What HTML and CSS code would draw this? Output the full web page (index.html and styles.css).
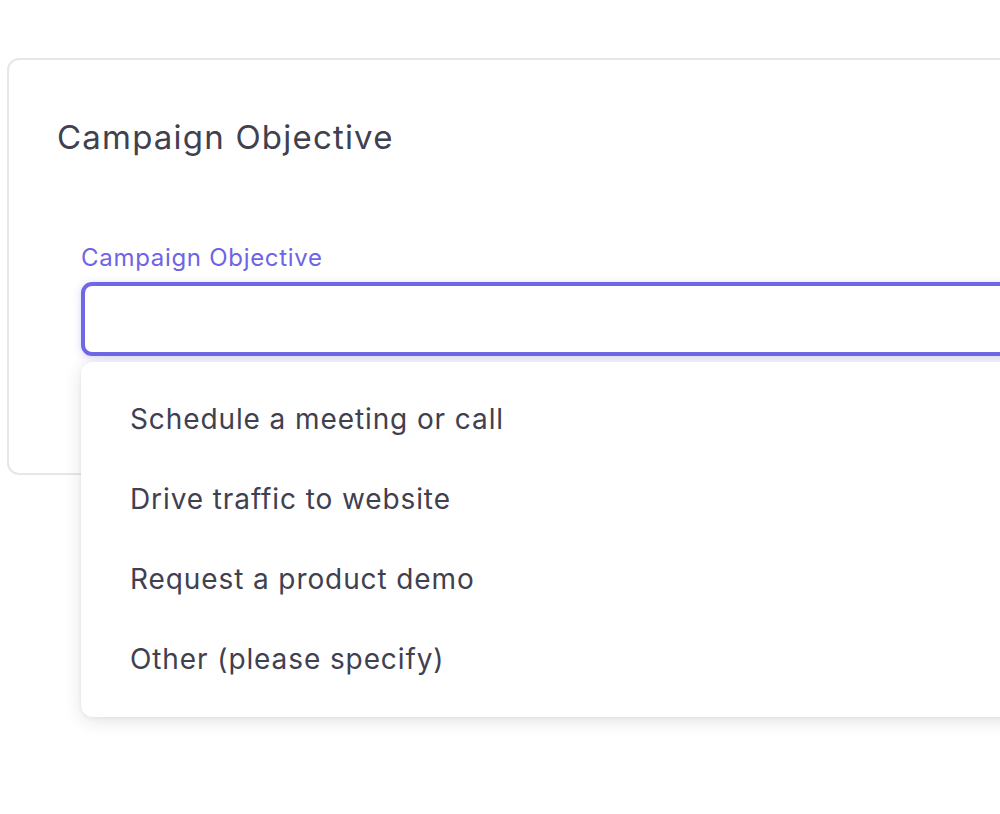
FILE: index.html
```html
<!DOCTYPE html>
<html lang="en">
<head>
<meta charset="utf-8">
<title>Campaign Objective</title>
<link rel="stylesheet" href="styles.css">
</head>
<body>
<div class="page">
  <section class="card">
    <h2 class="card-title">Campaign Objective</h2>
    <div class="field">
      <label class="field-label" for="objective">Campaign Objective</label>
      <div class="select-wrap">
        <input id="objective" class="select-input" type="text">
        <ul class="menu">
          <li class="menu-item">Schedule a meeting or call</li>
          <li class="menu-item">Drive traffic to website</li>
          <li class="menu-item">Request a product demo</li>
          <li class="menu-item">Other (please specify)</li>
        </ul>
      </div>
    </div>
  </section>
</div>
</body>
</html>
```

FILE: styles.css
```css
html, body {
  margin: 0;
  padding: 0;
  background: #ffffff;
  overflow: hidden;
}
body {
  font-family: Inter, "Noto Sans", "Liberation Sans", sans-serif;
  color: #40404f;
}
.page {
  width: 1000px;
  height: 814px;
  overflow: hidden;
  padding-top: 58px;
  padding-left: 7px;
  box-sizing: border-box;
}
.card {
  width: 1200px;
  height: 417px;
  box-sizing: border-box;
  border: 2px solid #e7e7e9;
  border-radius: 12px;
  padding: 57px 0 0 48px;
}
.card-title {
  margin: 0;
  font-size: 33px;
  font-weight: 400;
  line-height: 40px;
  color: #40404f;
  letter-spacing: 1.2px;
}
.field {
  margin-top: 86px;
  padding-left: 24px;
}
.field-label {
  display: block;
  font-size: 24px;
  line-height: 30px;
  color: #6e64e6;
  letter-spacing: 0.7px;
  margin-bottom: 9px;
}
.select-wrap {
  position: relative;
}
.select-input {
  display: block;
  width: 1100px;
  height: 74px;
  box-sizing: border-box;
  border: 4px solid #7067e6;
  border-radius: 11px;
  background: #ffffff;
  outline: none;
  box-shadow: 0 2px 8px rgba(112, 103, 230, 0.28);
  margin: 0;
}
.menu {
  position: absolute;
  left: 0;
  top: 80px;
  width: 1100px;
  margin: 0;
  padding: 17px 0 18px 0;
  list-style: none;
  background: #ffffff;
  border-radius: 12px;
  box-shadow: 0 4px 18px rgba(30, 30, 60, 0.12), 0 1px 4px rgba(30, 30, 60, 0.06);
  box-sizing: border-box;
}
.menu-item {
  height: 80px;
  line-height: 80px;
  padding-left: 49px;
  font-size: 28px;
  letter-spacing: 0.9px;
  color: #40404f;
}
```
